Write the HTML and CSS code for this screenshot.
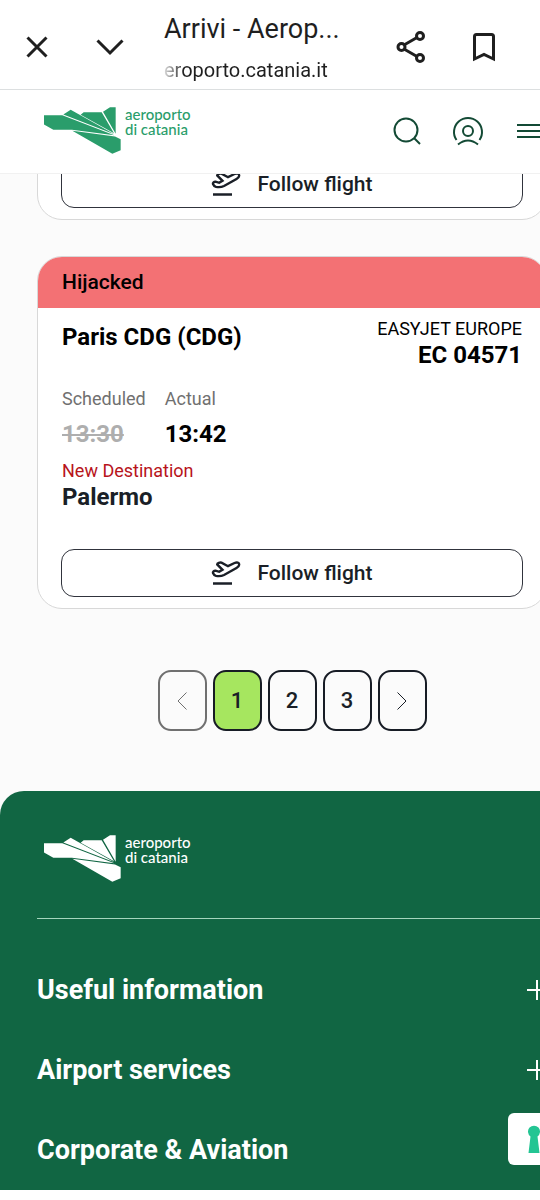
FILE: index.html
```html
<!DOCTYPE html>
<html lang="en">
<head>
<meta charset="utf-8">
<meta name="viewport" content="width=device-width, initial-scale=1">
<title>Arrivi - Aeroporto di Catania</title>
<link rel="stylesheet" href="styles.css">
</head>
<body>
<svg class="defs" aria-hidden="true">
  <symbol id="logo" viewBox="132 51 231 140">
    <path d="M132 75H187L343 135L216 119H160L132 103ZM190 73L212 59L343 132ZM242 74L251 66H305L342 129ZM309 65L330 51H347V131ZM217 122L345 139L362 147V180L337 191Z"/>
  </symbol>
  <symbol id="takeoff" viewBox="0 0 30 28">
    <path d="M2 24.500H21" />
    <path d="M2 14C1.500 12.800 3 11.600 4.500 11.700L8.200 12.800L11.500 10.800L6.200 5.400C6.200 4 9 3.300 10.500 3.700L17 7.200L23.500 4C26 3 28.400 3.600 28.200 5.600C28.100 7 27.200 8 25.500 9L13 16C11 17 8.500 17.400 5 16.900C3.600 16.500 2.600 15.500 2 14Z"/>
  </symbol>
</svg>

<header class="browser">
  <button class="browser-btn" aria-label="Close"><svg width="24" height="24" viewBox="0 0 24 24"><path d="M2.500 2.500L21.500 21.500M21.500 2.500L2.500 21.500"/></svg></button>
  <button class="browser-btn" aria-label="Minimise"><svg width="28" height="18" viewBox="0 0 28 18"><path d="M1.500 2.500L14 15L26.500 2.500"/></svg></button>
  <div class="address">
    <div class="address-title">Arrivi - Aerop...</div>
    <div class="address-url">eroporto.catania.it</div>
  </div>
  <button class="browser-btn" aria-label="Share"><svg width="30" height="32" viewBox="0 0 30 32"><path d="M8 14L21 6.500M8 18L21 25.500"/><circle cx="5.500" cy="16" r="3.500"/><circle cx="24" cy="5" r="3.500"/><circle cx="24" cy="27" r="3.500"/></svg></button>
  <button class="browser-btn" aria-label="Bookmark"><svg width="24" height="30" viewBox="0 0 24 30"><path d="M2.500 27V4.500Q2.500 2.500 4.500 2.500H19.500Q21.500 2.500 21.500 4.500V27L12 22.500Z"/></svg></button>
</header>

<div class="page">
  <header class="site-header">
    <a class="logo" href="#"><svg width="77" height="47"><use href="#logo"/></svg><span>aeroporto<br>di catania</span></a>
    <nav class="tools">
      <button aria-label="Search"><svg width="36" height="36" viewBox="0 0 36 36"><circle cx="17" cy="17" r="11.500"/><path d="M25 25L31 31"/></svg></button>
      <button aria-label="Account"><svg width="36" height="36" viewBox="0 0 36 36"><path d="M6.500 27A14 14 0 1 1 29.500 27M8 31.500Q18 23.500 28 31.500"/><circle cx="18" cy="18" r="5"/></svg></button>
      <button aria-label="Menu"><svg width="36" height="36" viewBox="0 0 36 36"><path d="M6 12H36M6 18H36M6 24H36"/></svg></button>
    </nav>
  </header>

  <main class="flights">
    <article class="card card-previous">
      <button class="follow"><svg width="30" height="28"><use href="#takeoff"/></svg>Follow flight</button>
    </article>

    <article class="card">
      <div class="status">Hijacked</div>
      <div class="route">
        <h2>Paris CDG (CDG)</h2>
        <div class="carrier"><div>EASYJET EUROPE</div><strong>EC 04571</strong></div>
      </div>
      <dl class="times">
        <div><dt>Scheduled</dt><dd class="old">13:30</dd></div>
        <div><dt>Actual</dt><dd>13:42</dd></div>
      </dl>
      <div class="diversion"><div>New Destination</div><strong>Palermo</strong></div>
      <button class="follow"><svg width="30" height="28"><use href="#takeoff"/></svg>Follow flight</button>
    </article>

    <nav class="pager" aria-label="Pages">
      <button disabled aria-label="Previous"><svg width="12" height="20" viewBox="0 0 12 20"><path d="M10.500 1.500L2 10L10.500 18.500"/></svg></button>
      <button class="current" aria-current="page">1</button>
      <button>2</button>
      <button>3</button>
      <button aria-label="Next"><svg width="12" height="20" viewBox="0 0 12 20"><path d="M1.500 1.500L10 10L1.500 18.500"/></svg></button>
    </nav>
  </main>

  <footer class="footer">
    <a class="logo" href="#"><svg width="77" height="47"><use href="#logo"/></svg><span>aeroporto<br>di catania</span></a>
    <div class="sections">
      <button>Useful information<svg width="20" height="20" viewBox="0 0 20 20"><path d="M0 10H20M10 0V20"/></svg></button>
      <button>Airport services<svg width="20" height="20" viewBox="0 0 20 20"><path d="M0 10H20M10 0V20"/></svg></button>
      <button>Corporate &amp; Aviation</button>
    </div>
  </footer>
</div>

<button class="privacy" aria-label="Privacy settings"><svg width="12" height="28" viewBox="0 0 12 28"><path d="M2.500 11.500A6 6 0 1 1 9.500 11.500L11.500 28H0.500Z"/></svg></button>
</body>
</html>
```
FILE: styles.css
```css
* { box-sizing: border-box; }

body {
  margin: 0;
  min-height: 100vh;
  overflow-x: hidden;
  background: #fff;
  color: #000;
  font-family: Roboto, "Liberation Sans", sans-serif;
}

button {
  margin: 0;
  padding: 0;
  border: 0;
  background: none;
  color: inherit;
  font: inherit;
}

svg { display: block; flex: none; }

.defs { position: absolute; width: 0; height: 0; }

/* Browser bar */
.browser {
  display: flex;
  align-items: center;
  height: 90px;
  padding: 0 20px 0 0;
  border-bottom: 1px solid #dcdfe0;
  color: #1f1f1f;
}

.browser-btn {
  display: grid;
  place-items: center;
  width: 73px;
  height: 73px;
  padding-top: 4px;
}

.browser-btn svg { fill: none; stroke: currentColor; stroke-width: 3; }

.address { flex: 1; padding: 10px 0 0 18px; white-space: nowrap; }
.address-title { font-size: 27px; line-height: 40px; }

.address-url {
  font-size: 20px;
  line-height: 42px;
  background: linear-gradient(90deg, #ddd, #1f1f1f 20px);
  background-clip: text;
  color: transparent;
}

/* The site keeps a layout slightly wider than the window */
.page { width: calc(100% + 44px); }

.site-header {
  position: relative;
  z-index: 1;
  display: flex;
  justify-content: space-between;
  align-items: center;
  height: 84px;
  padding: 0 37px 2px 44px;
  background: #fff;
  border-bottom: 1px solid #f1f1f1;
}

.logo {
  display: flex;
  gap: 4px;
  color: #2a9d6b;
  font: 500 15px/15px Lato, sans-serif;
  text-decoration: none;
}

.logo svg { fill: currentColor; }

.tools { display: flex; gap: 25px; color: #134a35; }
.tools svg { fill: none; stroke: currentColor; stroke-width: 2; }

/* Flights; the bottom padding runs on behind the footer's round corners */
.flights { margin-bottom: -24px; padding: 0 37px 84px; background: #fbfbfb; }

.card {
  overflow: hidden;
  padding-bottom: 11px;
  border: 1px solid #d8d8d8;
  border-radius: 25px;
  background: #fff;
}

.card-previous { margin-top: -39px; margin-bottom: 36px; padding-top: 24px; }

.status {
  padding-left: 24px;
  background: #f37174;
  font-size: 21px;
  font-weight: 500;
  line-height: 51px;
}

.route { display: flex; justify-content: space-between; padding: 7px 24px 0; }
.route h2 { margin: 0; font-size: 24px; line-height: 44px; font-weight: 700; }
.carrier { padding-top: 1px; text-align: right; font-size: 18px; line-height: 26px; }
.carrier strong { font-size: 24px; }

.times { display: flex; gap: 19px; margin: 15px 24px 0; font-size: 18px; }
.times dt { color: #707070; line-height: 28px; }
.times dd { margin: 0; font-size: 24px; font-weight: 700; line-height: 42px; }
.times .old { color: #aeaeae; text-decoration: line-through; text-decoration-thickness: 2px; }

.diversion { margin: 3px 24px 37px; color: #b7141b; font-size: 18px; line-height: 26px; }
.diversion strong { color: #1a1f27; font-size: 24px; }

.follow {
  display: flex;
  align-items: center;
  justify-content: center;
  gap: 16px;
  width: calc(100% - 46px);
  height: 48px;
  margin: 0 23px;
  border: 1px solid #30333c;
  border-radius: 13px;
  color: #1a1f27;
  font-size: 21px;
  font-weight: 500;
}

.follow svg { fill: none; stroke: currentColor; stroke-width: 2.4; }

/* Pagination */
.pager { display: flex; justify-content: center; gap: 6px; margin-top: 61px; }

.pager button {
  display: grid;
  place-items: center;
  width: 49px;
  height: 61px;
  border: 2px solid #171c25;
  border-radius: 13px;
  color: #1a1f27;
  font-size: 22px;
  font-weight: 500;
}

.pager button:disabled { border-color: #707070; color: #707070; }
.pager .current { background: #a6e65f; }
.pager svg { fill: none; stroke: currentColor; stroke-width: 1; }

/* Footer */
.footer {
  position: relative;
  padding: 44px 37px 0;
  border-radius: 24px 24px 0 0;
  background: #116643;
  color: #fff;
}

.footer .logo { padding-left: 7px; color: #fff; }
.sections { margin-top: 36px; padding-top: 31px; border-top: 1px solid #a5d5bd; }

.sections button {
  display: flex;
  align-items: center;
  justify-content: space-between;
  width: 100%;
  height: 80px;
  font-size: 27px;
  font-weight: 700;
}

.sections svg { fill: none; stroke: currentColor; stroke-width: 2; }

/* Privacy shortcut pinned over the page */
.privacy {
  position: fixed;
  right: -20px;
  bottom: 35px;
  z-index: 2;
  padding: 12px 20px;
  border-radius: 6px;
  background: #fff;
}

.privacy svg { fill: #23c593; }
```
